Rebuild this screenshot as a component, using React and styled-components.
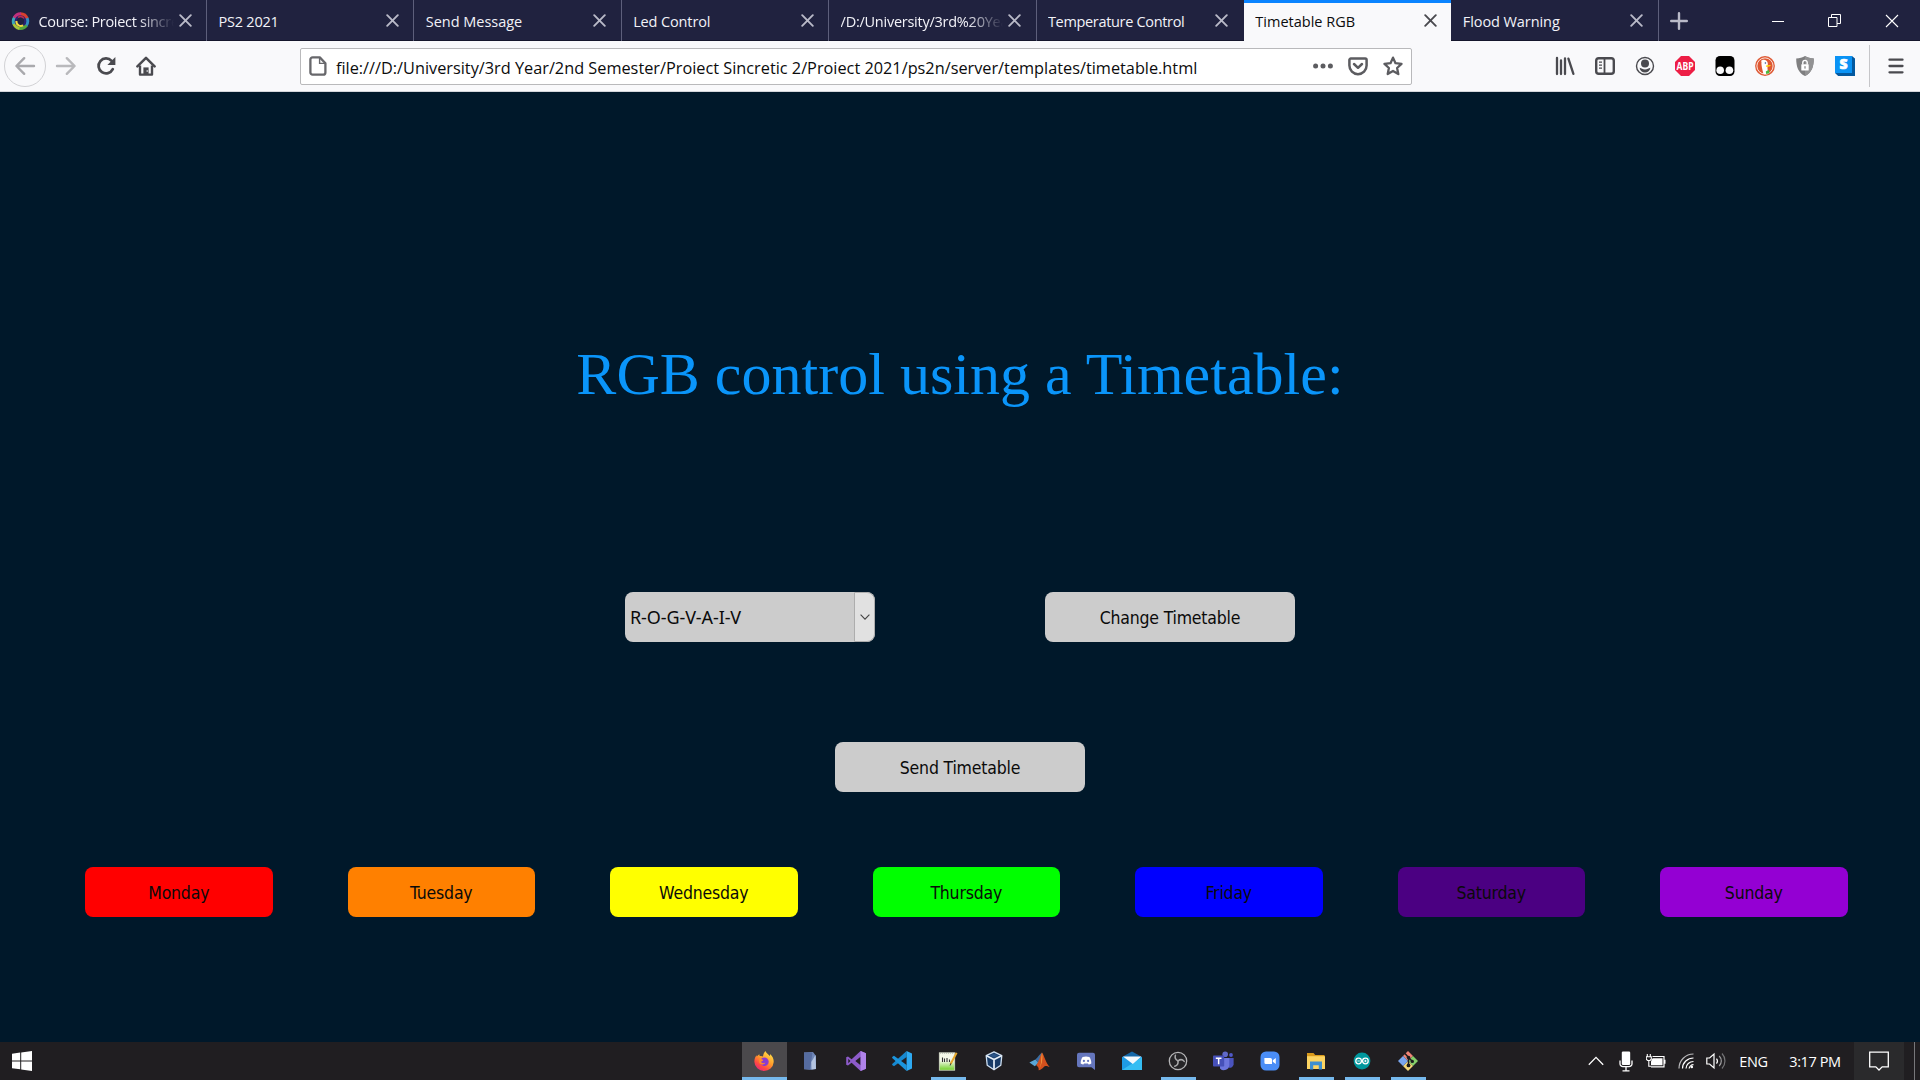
import React from "react";
import styled, { createGlobalStyle } from "styled-components";

const Global = createGlobalStyle`
  * { box-sizing: border-box; }
  html, body { margin: 0; padding: 0; overflow: hidden; background: #00182a; }
  svg { display: block; flex: none; }
`;

const UI_FONT = `"Open Sans", "Noto Sans", sans-serif`;

const Screen = styled.div`
  display: flex;
  flex-direction: column;
  width: 1920px;
  height: 1080px;
  background: #00182a;
  font-family: ${UI_FONT};
`;

/* ---------- tab strip ---------- */
const TabStrip = styled.div`
  display: flex;
  height: 41px;
  background: #20223f;
  box-shadow: inset 0 -1px 0 #15162c;
`;

const Tab = styled.div`
  display: flex;
  align-items: center;
  width: ${(p) => (p.$first ? 207 : 207.4)}px;
  height: 41px;
  padding: 0 ${(p) => (p.$first ? 14 : 14.5)}px 0 ${(p) => (p.$first ? 11 : 11.4)}px;
  color: ${(p) => (p.$active ? "#0c0c0d" : "#f2f2f8")};
  background: ${(p) => (p.$active ? "#f9f9fb" : "transparent")};
  border-top: ${(p) => (p.$active ? "3px solid #0a84ff" : "none")};
  border-right: 1px solid ${(p) => (p.$edge ? "transparent" : "#5d5f7b")};
  ${(p) => p.$active && "border-right: none; padding-bottom: 3px;"}
`;

const TabLabel = styled.span`
  flex: 1;
  min-width: 0;
  padding-top: 2px;
  overflow: hidden;
  white-space: nowrap;
  font-size: 14.5px;
  line-height: 22px;
  letter-spacing: ${(p) => p.$ls || 0}px;
  ${(p) => p.$fade && "mask-image: linear-gradient(to right, #000 calc(100% - 36px), transparent 100%);"}
`;

const Favicon = styled.span`
  margin-right: 8.5px;
`;

const TabClose = styled.span`
  width: 13px;
  margin-left: 5px;
`;

const NewTab = styled.div`
  display: flex;
  align-items: center;
  width: 38px;
  padding-left: 11px;
`;

const WindowControls = styled.div`
  display: flex;
  align-items: center;
  margin-left: auto;
`;

const WindowButton = styled.div`
  display: grid;
  place-items: center;
  width: 57px;
  height: 40px;
`;

/* ---------- toolbar ---------- */
const Toolbar = styled.div`
  display: flex;
  align-items: center;
  height: 51px;
  padding-left: 4px;
  background: #f9f9fb;
  border-bottom: 1px solid #d3d5da;
`;

const BackButton = styled.div`
  display: grid;
  place-items: center;
  width: 42px;
  height: 42px;
  border: 1px solid #d2d2d5;
  border-radius: 50%;
`;

const ToolButton = styled.div`
  display: grid;
  place-items: center;
  width: 40px;
  height: 42px;
`;

const AddressBar = styled.div`
  display: flex;
  align-items: center;
  width: 1112px;
  height: 37px;
  margin: 0 133px 0 134px;
  padding: 0 8px;
  background: #fff;
  border: 1px solid #b9b9bb;
  border-radius: 2px;
`;

const Address = styled.span`
  flex: 1;
  padding: 3px 0 0 9px;
  white-space: nowrap;
  color: #0c0c0d;
  font-size: 16.3px;
  line-height: 24px;
`;

const AddressActions = styled.div`
  display: flex;
  align-items: center;
  gap: 15px;
`;

const Divider = styled.div`
  width: 1px;
  height: 42px;
  margin: 0 6px 0 4px;
  background: #c6c6c9;
`;

/* ---------- page ---------- */
const Page = styled.main`
  display: flex;
  flex-direction: column;
  align-items: center;
  height: 950px;
  padding-top: 248px;
  background: #00182a;
`;

const Heading = styled.h1`
  margin: 0;
  height: 69px;
  color: #0a95fa;
  font: 400 60px/68px "Liberation Serif", "Times New Roman", serif;
  letter-spacing: 0.02px;
`;

const ControlRow = styled.div`
  display: flex;
  gap: 170px;
  margin-top: ${(p) => p.$top}px;
`;

const Button = styled.button`
  width: 250px;
  height: 50px;
  padding: 2px 0 0;
  border: 0;
  border-radius: 8px;
  color: #0a0a0a;
  background: ${(p) => p.$color || "#cccccc"};
  font: 17.5px "DejaVu Sans Condensed", "DejaVu Sans", sans-serif;
  font-stretch: condensed;
  letter-spacing: -0.19px;
`;

const Dropdown = styled.div`
  display: flex;
  width: 250px;
  height: 50px;
  overflow: hidden;
  border-radius: 8px;
  background: #cccccc;
`;

const DropdownValue = styled.span`
  flex: 1;
  padding-left: 5px;
  color: #0a0a0a;
  font: 18px/50px "Noto Sans", sans-serif;
  letter-spacing: -0.1px;
`;

const DropdownArrow = styled.span`
  display: grid;
  place-items: center;
  width: 21px;
  border: 1px solid #adadad;
  border-radius: 0 8px 8px 0;
  background: #e1e1e1;
`;

const Week = styled.div`
  display: grid;
  grid-template-columns: repeat(7, 187.5px);
  gap: 75px;
  align-self: stretch;
  margin-top: 75px;
  padding-left: 85px;

  ${Button} { width: 100%; }
`;

/* ---------- taskbar ---------- */
const Taskbar = styled.div`
  display: flex;
  height: 38px;
  background: #201e21;
`;

const StartButton = styled.div`
  display: grid;
  place-items: center;
  width: 44px;
`;

const Apps = styled.div`
  display: flex;
  gap: 1px;
  margin-left: 698px;
`;

const TaskButton = styled.div`
  display: grid;
  place-items: center;
  width: 45px;
  height: 38px;
  padding-right: 2px;
  background: ${(p) => (p.$active ? "#4b494c" : "transparent")};
  background-image: ${(p) => (p.$open ? "linear-gradient(#76b9ed, #76b9ed)" : "none")};
  background-size: ${(p) => (p.$active ? 45 : 35)}px 3px;
  background-position: bottom center;
  background-repeat: no-repeat;
`;

const Tray = styled.div`
  display: flex;
  margin-left: auto;
  color: #fff;
`;

const TrayIcon = styled.div`
  display: grid;
  place-items: center;
  width: 30px;
`;

const TrayText = styled.div`
  width: ${(p) => p.$w}px;
  padding-right: 1px;
  padding-top: 1px;
  text-align: center;
  white-space: nowrap;
  font-size: 14.5px;
  line-height: 38px;
  letter-spacing: -0.38px;
`;

const ActionCenter = styled.div`
  display: grid;
  place-items: center;
  width: 50px;
  margin-right: 10px;
  background: #2a2a2c;
`;

const ShowDesktop = styled.div`
  width: 6px;
  border-left: 1px solid #77777a;
`;

/* ---------- drawings ---------- */
const Svg = ({ w = 20, h = w, vb = `0 0 ${w} ${h}`, children, ...rest }) => (
  <svg width={w} height={h} viewBox={vb} fill="none" {...rest}>{children}</svg>
);

const CloseX = ({ color }) => (
  <Svg w={13} stroke={color} strokeWidth="1.9" strokeLinecap="round"><path d="M1.2 1.2l10.6 10.6M11.8 1.2L1.2 11.8" /></Svg>
);

const CourseIcon = () => (
  <Svg w={19} h={20}>
    <g strokeWidth="4.4">
      <path d="M9.5 3.4A6.6 6.8 0 0 1 15.6 8" stroke="#d8402f" />
      <path d="M15.4 7.4A6.6 6.8 0 0 1 14.4 14.5" stroke="#2f8fc0" />
      <path d="M14.8 14A6.6 6.8 0 0 1 8 16.6" stroke="#52a83c" />
      <path d="M8.6 16.8A6.6 6.8 0 0 1 3.3 12" stroke="#a8c83a" />
      <path d="M3.5 12.8A6.6 6.8 0 0 1 4.2 6.4" stroke="#39a9b8" />
      <path d="M3.8 7A6.6 6.8 0 0 1 10 3.4" stroke="#c2307c" />
    </g>
    <circle cx="9.5" cy="10.2" r="4.800" stroke="#2b2270" strokeWidth="2.200" />
    <path d="M5.400 10a4.600 4.600 0 0 0 6.800 4.400" stroke="#f2dd3c" strokeWidth="2" />
    <path d="M7 6.400a4.600 4.600 0 0 1 6 1" stroke="#c22a4c" strokeWidth="1.400" />
  </Svg>
);

const ArrowLeft = () => (
  <Svg w={22} stroke="#a9a9ad" strokeWidth="2.4" strokeLinecap="round" strokeLinejoin="round"><path d="M20 11H2.6M10.2 3.2L2.4 11l7.8 7.8" /></Svg>
);
const ArrowRight = () => (
  <Svg w={22} stroke="#b9b9bc" strokeWidth="2.4" strokeLinecap="round" strokeLinejoin="round"><path d="M2 11h17.4M11.8 3.2l7.8 7.8-7.8 7.8" /></Svg>
);
const Reload = () => (
  <Svg w={20}>
    <path d="M16.8 13.2A7.5 7.5 0 1 1 15.6 4.800" stroke="#4a4a4f" strokeWidth="2.7" strokeLinecap="round" />
    <path d="M19.400 1v8h-8z" fill="#4a4a4f" />
  </Svg>
);
const Home = () => (
  <Svg w={20}>
    <path d="M1.4 10.4L10 1.8l8.6 8.6" stroke="#4a4a4f" strokeWidth="2.5" strokeLinecap="round" strokeLinejoin="round" />
    <path d="M4 9.4v9.2h12V9.4" stroke="#4a4a4f" strokeWidth="2.4" strokeLinejoin="round" />
    <path d="M7.4 19v-7.6h5.2V19z" fill="#4a4a4f" />
    <circle cx="11.2" cy="15" r=".8" fill="#f9f9fb" />
  </Svg>
);
const PageIcon = () => (
  <Svg w={18} h={20}>
    <path d="M3.6 1.4h7.2l5.6 5.8v9.2a2.2 2.2 0 0 1-2.2 2.2H3.6a2.2 2.2 0 0 1-2.2-2.2V3.6a2.2 2.2 0 0 1 2.2-2.2z" stroke="#67676b" strokeWidth="2.3" strokeLinejoin="round" />
    <path d="M10.6 2v5.4h5.4" stroke="#67676b" strokeWidth="1.4" />
  </Svg>
);
const Dots = () => (
  <Svg w={20} h={6}><g fill="#5c5c60"><circle cx="2.6" cy="3" r="2.5" /><circle cx="10" cy="3" r="2.5" /><circle cx="17.4" cy="3" r="2.5" /></g></Svg>
);
const Pocket = () => (
  <Svg w={20} h={19} stroke="#5c5c60" strokeWidth="2.5" strokeLinecap="round" strokeLinejoin="round">
    <path d="M2.8 1.6h14.4a1.4 1.4 0 0 1 1.4 1.4v5.6a8.6 8.6 0 0 1-17.2 0V3a1.4 1.4 0 0 1 1.4-1.4z" /><path d="M6 7l4 3.8L14 7" />
  </Svg>
);
const Star = () => (
  <Svg w={20} stroke="#5c5c60" strokeWidth="2.3" strokeLinejoin="round"><path d="M10 1.6l2.5 5.6 6 .7-4.4 4.1 1.2 6L10 15l-5.3 3 1.2-6L1.5 7.9l6-.7z" /></Svg>
);
const Library = () => (
  <Svg w={20} stroke="#4a4a4f" strokeWidth="2.3" strokeLinecap="round"><path d="M2 2v16M6 4.5V18M10 2.5V18" /><path d="M13.4 2.6l5 15.2" /></Svg>
);
const Sidebar = () => (
  <Svg w={20}>
    <rect x="1.2" y="2.2" width="17.6" height="15.6" rx="2.6" stroke="#4a4a4f" strokeWidth="2.4" />
    <path d="M9.5 2v16" stroke="#4a4a4f" strokeWidth="1.8" />
    <path d="M4 6.2h3M4 9.2h3M4 12.2h3" stroke="#4a4a4f" strokeWidth="1.3" />
  </Svg>
);
const Account = () => (
  <Svg w={20}>
    <circle cx="10" cy="10" r="8.5" stroke="#4a4a4f" strokeWidth="1.4" />
    <circle cx="10" cy="7.6" r="4" fill="#4a4a4f" />
    <path d="M4.6 11.8c2 .6 3 1.6 5.400 1.6s3.4-1 5.4-1.6c-.4 3-2.6 4.800-5.4 4.800s-5-1.8-5.4-4.800z" fill="#4a4a4f" />
  </Svg>
);
const Abp = () => (
  <Svg w={20}>
    <path d="M6 0h8l6 6v8l-6 6H6l-6-6V6z" fill="#ed1e45" />
    <text x="10" y="13.7" textAnchor="middle" textLength="17" lengthAdjust="spacingAndGlyphs" fontFamily="Open Sans, sans-serif" fontSize="10.5" fontWeight="700" fill="#fff">ABP</text>
  </Svg>
);
const Tamper = () => (
  <Svg w={20}>
    <rect x=".5" width="19" height="20" rx="4.5" fill="#000" />
    <circle cx="5.2" cy="14.3" r="3.8" fill="#f9f9fb" /><circle cx="14.4" cy="14.3" r="3.8" fill="#f9f9fb" />
  </Svg>
);
const Duck = () => (
  <Svg w={20}>
    <circle cx="10" cy="10" r="9.9" fill="#de5833" /><circle cx="10" cy="10" r="8.1" fill="#de5833" stroke="#fbe4db" strokeWidth="1" />
    <path d="M7 4.2c2.4-1.2 5.500.2 5.800 3 .2 2.600-.6 4.200-.2 6.400l.8 4.200c-1.800.8-3.800.6-5 .2C7.600 14 5.800 8 6.600 5.800L5.800 5z" fill="#fff" />
    <path d="M11 9.600c1.800-.8 3.600-.8 5-.4-.8 1.200-2.200 1.600-4.600 1.800z" fill="#fdd20a" />
    <path d="M10.8 15.4l3-1.600.8 3.400-3.400.8z" fill="#4cba3c" />
    <circle cx="10.4" cy="7" r=".8" fill="#2d4f8e" />
  </Svg>
);
const Shield = () => (
  <Svg w={20}>
    <path d="M10 0c2.4 1.6 5.400 2.4 8.800 2.400 0 8-1.800 14-8.800 17.600C3 16.400 1.200 10.400 1.200 2.400 4.600 2.400 7.600 1.600 10 0z" fill="#7f7f80" />
    <path d="M10 0c2.4 1.6 5.400 2.4 8.800 2.400 0 8-1.800 14-8.800 17.600z" fill="#929293" />
    <rect x="6.3" y="8.2" width="7.4" height="6.4" rx=".6" fill="#fff" />
    <path d="M7.8 8.4V6.600a2.200 2.200 0 0 1 4.400 0v1.800" stroke="#fff" strokeWidth="1.4" />
    <rect x="9.4" y="10.2" width="1.2" height="2.4" fill="#808080" />
  </Svg>
);
const SBadge = () => (
  <Svg w={20}>
    <path d="M17 0l3 2.6V20H3.2L0 17z" fill="#04599f" /><rect width="17" height="17" fill="#0a93f5" />
    <text x="8.5" y="13.4" textAnchor="middle" fontFamily="Open Sans, sans-serif" fontSize="14" fontWeight="800" fill="#fff" stroke="#fff" strokeWidth=".7">S</text>
  </Svg>
);
const Menu = () => (
  <Svg w={16} stroke="#4a4a4f" strokeWidth="2.3" strokeLinecap="round"><path d="M1.5 1.7h13M1.5 8h13M1.5 14.3h13" /></Svg>
);

const WindowsLogo = () => (
  <Svg w={20}><path fill="#fff" d="M0 2.8l8.200-1.200v7.800H0zM9.200 1.450L20 0v9.400H9.200zM0 10.400h8.200v7.900L0 17.200zM9.200 10.400H20V20L9.200 18.450z" /></Svg>
);
const Firefox = () => (
  <Svg w={20}>
    <defs>
      <linearGradient id="fx" x1="16" y1="1" x2="4" y2="19" gradientUnits="userSpaceOnUse"><stop stopColor="#ffe14a" /><stop offset=".45" stopColor="#ff9a2a" /><stop offset=".75" stopColor="#ff4a42" /><stop offset="1" stopColor="#e8267c" /></linearGradient>
    </defs>
    <path d="M11.400 0c.4 2 3 3 4.400 5 .4-.6.300-1.400.2-2 3 2.400 4 5.600 3.600 8.600A9.700 9 0 0 1 10 20 9.700 9.400 0 0 1 .4 11C.2 8 1.400 5.600 2.400 4.200l.4 1.400c.8-1.200 1.600-2 2.600-2.400 0 .8 0 1.400.4 1.800 1.600-.2 2.400 0 3.200.4C9.200 3.400 10 1.400 11.400 0z" fill="url(#fx)" />
    <circle cx="10.4" cy="10.8" r="4.3" fill="#8a3bd0" />
    <path d="M5 8.6c1.400-.8 3-.6 4.200.4-.4 1-1.600 1.400-2.400 2 1.200 1.400 3.200 1.400 4.600.6-.8 2.600-4.800 2.600-6.200-.2z" fill="#ff8a2a" />
  </Svg>
);
const Notebook = () => (
  <Svg w={14} h={20}><path d="M1 1.500l9-.5L13 5v13l-5 .8-7-.5z" fill="#6f87b8" /><path d="M1 1.500h8.500L7 18.500l-6-.5z" fill="#566ca0" /><path d="M12.500 4L8.300 11l.2 7.600 4.500-.6z" fill="#b4c4e0" /></Svg>
);
const VisualStudio = () => (
  <Svg w={20}>
    <path d="M14.600 0L20 2.300v15.400L14.600 20 5.600 11.700 2 14.600.2 13.800V6.200L2 5.400l3.600 2.900zM14.600 5.800L9.300 10l5.300 4.200zM2.300 7.700v4.600L4.400 10z" fill="#8d5bc9" fillRule="evenodd" />
    <path d="M14.600 0L20 2.300v15.400L14.600 20z" fill="#b083ea" />
  </Svg>
);
const VsCode = () => (
  <Svg w={20}>
    <path d="M14.600 0v6L2 15.300.2 13.900v-1z" fill="#1688d0" /><path d="M14.600 20v-6L2 4.700.2 6.100v1z" fill="#1b95dd" /><path d="M14.600 0L20 2.400v15.200L14.600 20z" fill="#2eaaf2" />
  </Svg>
);
const NotepadPP = () => (
  <Svg w={20}>
    <defs><linearGradient id="np" x1="0" y1="0" x2="0" y2="1"><stop offset=".45" stopColor="#f4f8ea" /><stop offset="1" stopColor="#6ed026" /></linearGradient></defs>
    <rect x="1.3" y="1.8" width="15.4" height="17.4" fill="url(#np)" stroke="#d8dccb" strokeWidth=".8" />
    <path d="M2 2h14" stroke="#9aa29a" strokeWidth="1.2" strokeDasharray="1 1" />
    <path d="M4.500 11V6.500M6.500 11V7.500M9 11V7M11.500 11V8.500" stroke="#333" strokeWidth="1.1" />
    <path d="M18.600 1.800L12.600 13" stroke="#e6a72c" strokeWidth="2" /><path d="M12.900 12.300l-.8 2.200" stroke="#444" strokeWidth="1" />
  </Svg>
);
const VirtualBox = () => (
  <Svg w={18} h={20}>
    <path d="M9 .8l7.800 3.800-1 9.600L9 18.800 2.200 14.200l-1-9.600z" fill="#173a66" stroke="#cfe0f2" strokeWidth="1.3" strokeLinejoin="round" />
    <path d="M1.500 4.800L9 8.600l7.500-3.800M9 8.600v10" stroke="#e6eff8" strokeWidth="1.7" /><path d="M9 2.400l4.500 2.200L9 6.800 4.500 4.600z" fill="#2c5587" />
  </Svg>
);
const Matlab = () => (
  <Svg w={21} h={20}>
    <path d="M.4 11.6l6-3 3.200 3.200-3.800 3.400z" fill="#5aa6d6" /><path d="M6.400 8.600C9 6.800 10.600 3 13 1.600l-2 12-1.800-1.600z" fill="#3b6ea3" />
    <path d="M13 1.600c2.400 3 3.800 10.800 7.600 14.400-2.600-.8-4-1.800-6 .2-2 2-3 2.600-5 3 .6-2.200-.8-4-2.400-5C10 11 11 5 13 1.600z" fill="#d4511e" /><path d="M13 1.600c.8 4 .6 11-3 16.600 3-5 1.800-10 3-16.600z" fill="#f6a541" />
  </Svg>
);
const Discord = () => (
  <Svg w={18} h={20}>
    <path d="M2 1.800h14a2 2 0 0 1 2 2V19l-3.600-2.800H2a2 2 0 0 1-2-2V3.800a2 2 0 0 1 2-2z" fill="#6576bd" />
    <path d="M5.600 6c2.200-.8 4.600-.8 6.800 0 1.400 2 2 4.400 1.900 6.400-1 .8-1.900 1.100-2.700 1.200l-.6-1H7l-.6 1c-.8-.1-1.700-.4-2.700-1.200C3.600 10.400 4.200 8 5.600 6z" fill="#fff" />
    <circle cx="6.900" cy="9.9" r="1.1" fill="#6576bd" /><circle cx="11.100" cy="9.9" r="1.1" fill="#6576bd" />
  </Svg>
);
const Mail = () => (
  <Svg w={20} h={20}>
    <path d="M0 6l10-5.500L20 6v4H0z" fill="#1467a8" /><rect y="6" width="20" height="13" fill="#1e9be6" />
    <path d="M0 19L20 6.200V19z" fill="#35bdf3" /><path d="M1 5.600h18.400L10.800 13z" fill="#f4f9fd" />
  </Svg>
);
const Obs = () => (
  <Svg w={20}>
    <circle cx="10" cy="10" r="8.700" fill="#262528" stroke="#b5b5b7" strokeWidth="1.3" />
    <g stroke="#a9a9ab" strokeWidth="1.5" strokeLinecap="round">
      <path d="M10 9.800C7.600 8.600 6.600 6.600 7.400 4.200" />
      <path d="M10 9.800c2.200-1.600 4.600-1.400 6.200.6" />
      <path d="M10 9.800c.4 2.800-.8 4.600-3.200 5.400" />
    </g>
  </Svg>
);
const Teams = () => (
  <Svg w={21} h={20}>
    <circle cx="12.200" cy="3.2" r="2.8" fill="#6069c8" /><circle cx="18" cy="4" r="1.9" fill="#5059c9" />
    <path d="M13 7h7.600v6.500a3.800 3.800 0 0 1-5 3z" fill="#4a53bd" /><path d="M7 7h9.300v6.600a5.300 5.300 0 0 1-9.300 3.800z" fill="#6c75dc" />
    <rect y="4.4" width="11.2" height="11.2" rx=".8" fill="#4650b8" /><path d="M2.800 7.300h5.700M5.650 7.300v6" stroke="#fff" strokeWidth="1.5" />
  </Svg>
);
const Zoom = () => (
  <Svg w={20}><rect x=".5" y=".5" width="19" height="19" rx="5.5" fill="#4a8df6" /><path d="M4.400 7h6a1.600 1.600 0 0 1 1.600 1.600V13H6a1.600 1.600 0 0 1-1.600-1.600zM12.800 9.200L15.800 7v6l-3-2.200z" fill="#fff" /></Svg>
);
const Explorer = () => (
  <Svg w={20}>
    <path d="M1 2h6.500l1.700 2H18.500v3H1z" fill="#d99a1c" /><rect x="1" y="5.2" width="18" height="12.8" fill="#fcd462" />
    <path d="M4 18.400v-7.800h12v7.800h-3.200v-4.200H7.200v4.200z" fill="#3d8fd0" />
  </Svg>
);
const Arduino = () => (
  <Svg w={18}>
    <circle cx="9" cy="9" r="8.4" fill="#00979d" /><g stroke="#fff" strokeWidth="1.3"><circle cx="5.600" cy="9" r="2.8" /><circle cx="12.400" cy="9" r="2.8" /><path d="M4.400 9h2.400M11.200 9h2.400M12.400 7.800v2.400" strokeWidth=".9" /></g>
  </Svg>
);
const Git = () => (
  <Svg w={20}>
    <path d="M10 0l5 5-5 5-5-5z" fill="#ee8376" /><path d="M15 5l5 5-5 5-5-5z" fill="#84cf6a" /><path d="M10 10l5 5-5 5-5-5z" fill="#f5d878" /><path d="M5 5l5 5-5 5-5-5z" fill="#7aa6ee" />
    <path d="M7 2.500l3.500 4v8M10.500 6.500l4 4" stroke="#1c1c1e" strokeWidth="1.5" />
    <circle cx="10.500" cy="6.600" r="1.8" fill="#1c1c1e" /><circle cx="10.500" cy="14.400" r="1.9" fill="#1c1c1e" /><circle cx="14.300" cy="10.400" r="1.7" fill="#1c1c1e" />
  </Svg>
);

const Mic = () => (
  <Svg w={14} h={21}><rect x="2.800" y=".5" width="8.4" height="13.500" rx="1.2" fill="#fff" /><path d="M1 9.500v3.200a3 3 0 0 0 3 3h6a3 3 0 0 0 3-3V9.500M7 16v3.500M3.500 19.800h7" stroke="#fff" strokeWidth="1.3" /></Svg>
);
const Battery = () => (
  <Svg w={20} h={14}>
    <path d="M1.300 0v2.500M4.300 0v2.500M.3 2.800h5v2.400L4 6.500H1.600L.3 5.200zM2.800 6.500v5.800H5" stroke="#fff" strokeWidth="1.1" />
    <path d="M6.500 2.500H18v10.300H5M18.900 5.700v4" stroke="#fff" strokeWidth="1.2" /><path d="M6.600 4.300h9.900v6.900H5V7.200z" fill="#fff" />
  </Svg>
);
const Wifi = () => (
  <Svg w={16} stroke="#fff" strokeWidth="1.2">
    <path d="M1 15.500C1 7.500 7.500 1 15.500 1" stroke="#b9b9bb" /><path d="M4.500 15.500c0-6 5-10.500 11-10.500" /><path d="M8 15.500c0-4 3.500-7 7.500-7" /><path d="M11.200 15.500c0-2 2-3.800 4.300-3.800" /><circle cx="13.800" cy="14" r="1.3" fill="#fff" stroke="none" />
  </Svg>
);
const Speaker = () => (
  <Svg w={20} h={18} strokeWidth="1.2">
    <path d="M.8 6h2.800L8 2v14l-4.400-4H.8z" stroke="#fff" /><path d="M10.500 6.500a4 4 0 0 1 0 5" stroke="#fff" /><path d="M13.200 4a7 7 0 0 1 0 10" stroke="#a0a0a2" /><path d="M16 1.500a11 11 0 0 1 0 15" stroke="#747476" />
  </Svg>
);

const TABS = [
  { label: "Course: Proiect sincretic", ls: -0.3, fade: true, first: true },
  { label: "PS2 2021", ls: -0.2 },
  { label: "Send Message", ls: -0.03 },
  { label: "Led Control", ls: -0.13 },
  { label: "/D:/University/3rd%20Year", ls: -0.25, fade: true },
  { label: "Temperature Control", ls: -0.33, edge: true },
  { label: "Timetable RGB", active: true },
  { label: "Flood Warning", ls: -0.07 },
];

const EXTENSIONS = [Library, Sidebar, Account, Abp, Tamper, Duck, Shield, SBadge];

const DAYS = [
  ["Monday", "#ff0000"],
  ["Tuesday", "#ff8000"],
  ["Wednesday", "#ffff00"],
  ["Thursday", "#00ff00"],
  ["Friday", "#0000ff"],
  ["Saturday", "#4b0082"],
  ["Sunday", "#9400d3"],
];

const APPS = [
  { Icon: Firefox, open: true, active: true },
  { Icon: Notebook },
  { Icon: VisualStudio },
  { Icon: VsCode },
  { Icon: NotepadPP, open: true },
  { Icon: VirtualBox },
  { Icon: Matlab },
  { Icon: Discord },
  { Icon: Mail },
  { Icon: Obs, open: true },
  { Icon: Teams },
  { Icon: Zoom },
  { Icon: Explorer, open: true },
  { Icon: Arduino, open: true },
  { Icon: Git, open: true },
];

export default function App() {
  return (
    <Screen>
      <Global />
      <TabStrip>
        {TABS.map((t) => (
          <Tab key={t.label} $active={t.active} $first={t.first} $edge={t.edge}>
            {t.first && <Favicon><CourseIcon /></Favicon>}
            <TabLabel $ls={t.ls} $fade={t.fade}>{t.label}</TabLabel>
            <TabClose><CloseX color={t.active ? "#4a4a4f" : "#b9bac8"} /></TabClose>
          </Tab>
        ))}
        <NewTab>
          <Svg w={18} stroke="#b9bac8" strokeWidth="2.4" strokeLinecap="round"><path d="M9 1.2v15.600M1.200 9h15.600" /></Svg>
        </NewTab>
        <WindowControls>
          <WindowButton><Svg w={12} stroke="#fff"><path d="M0 6.500h12" /></Svg></WindowButton>
          <WindowButton><Svg w={13} stroke="#fff"><path d="M.5 3.500h8.500v9H.5zM3.500 3.500v-3h9v9H9" /></Svg></WindowButton>
          <WindowButton><Svg w={14} stroke="#fff" strokeWidth="1.1"><path d="M1 1l12 12M13 1L1 13" /></Svg></WindowButton>
        </WindowControls>
      </TabStrip>

      <Toolbar>
        <BackButton><ArrowLeft /></BackButton>
        <ToolButton><ArrowRight /></ToolButton>
        <ToolButton><Reload /></ToolButton>
        <ToolButton><Home /></ToolButton>
        <AddressBar>
          <PageIcon />
          <Address>file:///D:/University/3rd Year/2nd Semester/Proiect Sincretic 2/Proiect 2021/ps2n/server/templates/timetable.html</Address>
          <AddressActions><Dots /><Pocket /><Star /></AddressActions>
        </AddressBar>
        {EXTENSIONS.map((Icon, i) => <ToolButton key={i}><Icon /></ToolButton>)}
        <Divider />
        <ToolButton><Menu /></ToolButton>
      </Toolbar>

      <Page>
        <Heading>RGB control using a Timetable:</Heading>
        <ControlRow $top={183}>
          <Dropdown>
            <DropdownValue>R-O-G-V-A-I-V</DropdownValue>
            <DropdownArrow><Svg w={10} h={6} stroke="#444" strokeWidth="1.1"><path d="M.6.6L5 5.200 9.400.6" /></Svg></DropdownArrow>
          </Dropdown>
          <Button>Change Timetable</Button>
        </ControlRow>
        <ControlRow $top={100}>
          <Button>Send Timetable</Button>
        </ControlRow>
        <Week>
          {DAYS.map(([day, color]) => <Button key={day} $color={color}>{day}</Button>)}
        </Week>
      </Page>

      <Taskbar>
        <StartButton><WindowsLogo /></StartButton>
        <Apps>
          {APPS.map(({ Icon, open, active }, i) => <TaskButton key={i} $open={open} $active={active}><Icon /></TaskButton>)}
        </Apps>
        <Tray>
          <TrayIcon><Svg w={16} h={10} stroke="#fff" strokeWidth="1.3"><path d="M.8 8.800L8 1.400l7.200 7.400" /></Svg></TrayIcon>
          <TrayIcon><Mic /></TrayIcon>
          <TrayIcon><Battery /></TrayIcon>
          <TrayIcon><Wifi /></TrayIcon>
          <TrayIcon><Speaker /></TrayIcon>
          <TrayText $w={46}>ENG</TrayText>
          <TrayText $w={77}>3:17 PM</TrayText>
          <ActionCenter>
            <Svg w={20} h={20} stroke="#fff" strokeWidth="1.3"><path d="M.7 1.200h18.600v14.600h-6.100L10 19l-3.200-3.200H.7z" /></Svg>
          </ActionCenter>
          <ShowDesktop />
        </Tray>
      </Taskbar>
    </Screen>
  );
}
